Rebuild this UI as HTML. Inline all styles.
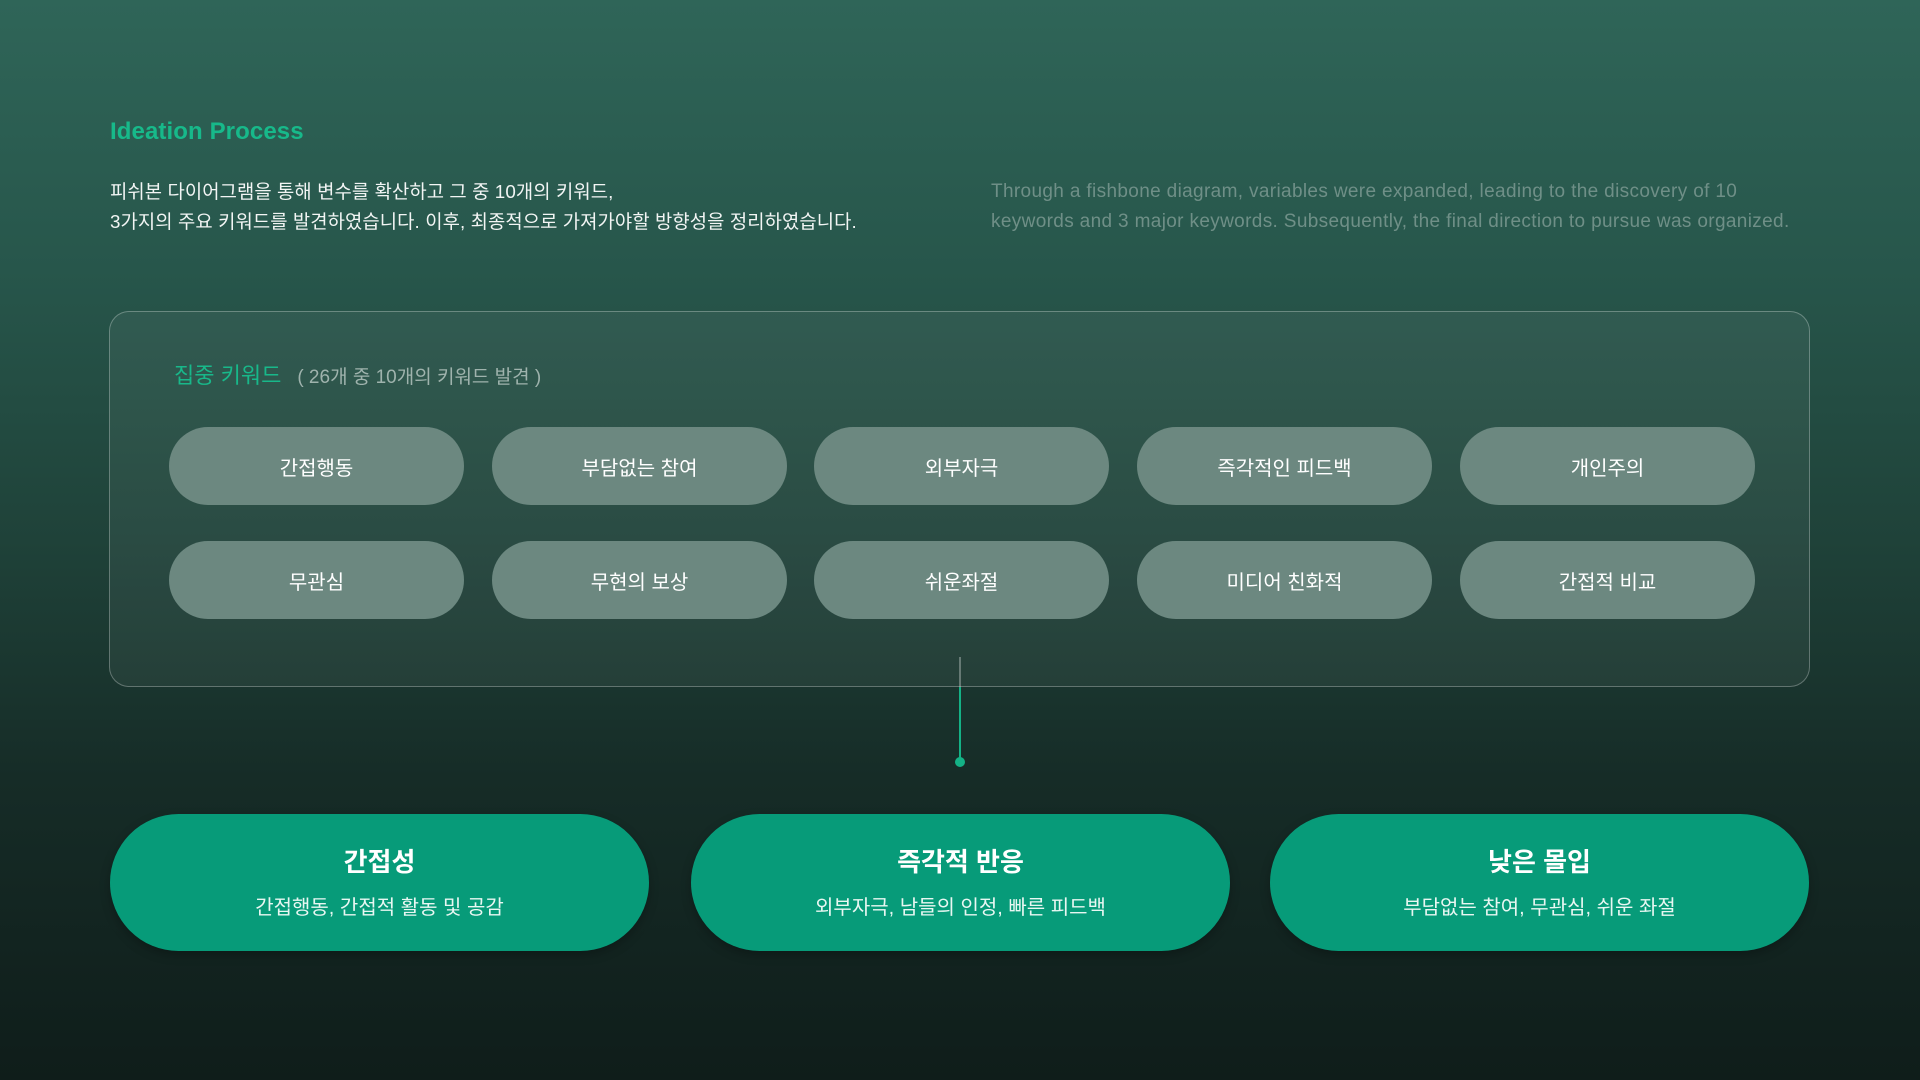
<!DOCTYPE html>
<html><head><meta charset="utf-8"><style>
*{margin:0;padding:0;box-sizing:border-box}
body{width:1920px;height:1080px;overflow:hidden;position:relative;
background:linear-gradient(180deg,#2f6558 0%,#27564b 25%,#1f4239 50%,#162c27 72%,#0f1d1a 100%);
font-family:"Liberation Sans","Noto Sans CJK KR",sans-serif;color:#fff}
.abs{position:absolute}
h1{position:absolute;left:110px;top:118px;font-size:24px;font-weight:bold;color:#17b98a;letter-spacing:0.1px}
.kp{left:110px;top:177px;font-size:18.8px;line-height:30px;color:#f2f5f4;letter-spacing:0.1px}
.ep{left:991px;top:177px;font-size:19px;line-height:30px;color:#6f8f87;letter-spacing:0.35px}
.box{left:109px;top:311px;width:1701px;height:376px;border-radius:20px;border:1.5px solid rgba(255,255,255,0.28);background:rgba(255,255,255,0.05)}
.kt{left:174px;top:358px;font-size:22px;color:#18b88a}
.kt span{font-size:19px;color:#9fb3ad;margin-left:16px}
.pill{position:absolute;width:295px;height:78px;border-radius:39px;background:#6c8880;display:flex;align-items:center;justify-content:center;font-size:20px;color:#fff}
.big{position:absolute;top:814px;width:539px;height:137px;border-radius:69px;background:#079b79;text-align:center;box-shadow:0 4px 10px rgba(0,0,0,0.25)}
.big b{display:block;margin-top:28px;font-size:26px}
.big p{margin-top:12px;font-size:20px;color:#e8f7f2}
</style></head><body>
<h1>Ideation Process</h1>
<div class="abs kp">피쉬본 다이어그램을 통해 변수를 확산하고 그 중 10개의 키워드,<br>3가지의 주요 키워드를 발견하였습니다. 이후, 최종적으로 가져가야할 방향성을 정리하였습니다.</div>
<div class="abs ep">Through a fishbone diagram, variables were expanded, leading to the discovery of 10<br>keywords and 3 major keywords. Subsequently, the final direction to pursue was organized.</div>
<div class="abs box"></div>
<div class="abs kt">집중 키워드<span>( 26개 중 10개의 키워드 발견 )</span></div>
<div class="pill" style="left:169px;top:427px">간접행동</div>
<div class="pill" style="left:492px;top:427px">부담없는 참여</div>
<div class="pill" style="left:814px;top:427px">외부자극</div>
<div class="pill" style="left:1137px;top:427px">즉각적인 피드백</div>
<div class="pill" style="left:1460px;top:427px">개인주의</div>
<div class="pill" style="left:169px;top:541px">무관심</div>
<div class="pill" style="left:492px;top:541px">무현의 보상</div>
<div class="pill" style="left:814px;top:541px">쉬운좌절</div>
<div class="pill" style="left:1137px;top:541px">미디어 친화적</div>
<div class="pill" style="left:1460px;top:541px">간접적 비교</div>
<div class="abs" style="left:959px;top:657px;width:2px;height:30px;background:rgba(255,255,255,0.3)"></div>
<div class="abs" style="left:959px;top:687px;width:2px;height:75px;background:#14b286"></div>
<div class="abs" style="left:955px;top:757px;width:10px;height:10px;border-radius:50%;background:#14b286"></div>
<div class="big" style="left:110px"><b>간접성</b><p>간접행동, 간접적 활동 및 공감</p></div>
<div class="big" style="left:691px"><b>즉각적 반응</b><p>외부자극, 남들의 인정, 빠른 피드백</p></div>
<div class="big" style="left:1270px"><b>낮은 몰입</b><p>부담없는 참여, 무관심, 쉬운 좌절</p></div>
</body></html>
